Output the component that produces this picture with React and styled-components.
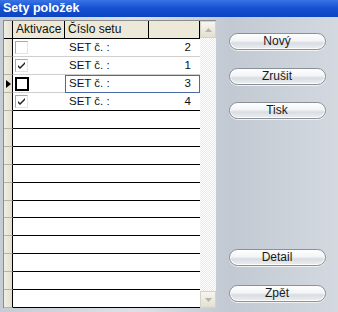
import React from "react";
import styled, { createGlobalStyle } from "styled-components";

const Global = createGlobalStyle`
  html, body { margin: 0; padding: 0; }
  body { font-family: "Liberation Sans", Arial, sans-serif; }
`;

const Window = styled.div`
  width: 338px;
  height: 312px;
  display: flex;
  flex-direction: column;
  overflow: hidden;
  background: linear-gradient(90deg, #c6ccd5 0%, #dde1e7 40%, #c2c9d2 68%, #d4d9e0 100%);
`;

const TitleBar = styled.div`
  height: 17px;
  flex: none;
  background: linear-gradient(180deg, #3a74e6 0%, #1652d4 45%, #0c44c0 100%);
  color: #fff;
  font-weight: bold;
  font-size: 12.5px;
  line-height: 17px;
  padding-left: 3px;
  font-family: "Liberation Sans", Arial, sans-serif;
`;

const Body = styled.div`
  flex: 1;
  display: flex;
  padding: 3px 0 0 3px;
`;

const Grid = styled.div`
  width: 213px;
  height: 288px;
  display: flex;
  background: #fff;
  box-sizing: border-box;
  border-left: 1px solid #8c8c8c;
  border-top: 1px solid #8c8c8c;
`;

const Table = styled.div`
  width: 196px;
  display: flex;
  flex-direction: column;
`;

const Row = styled.div`
  display: grid;
  grid-template-columns: 9px 52px 135px;
  height: 18px;
  & > * {
    box-sizing: border-box;
    border-bottom: 1px solid ${(p) => (p.$data ? "#cfcfcf" : "#000")};
  }
  & > *:first-child {
    border-bottom-color: ${(p) => (p.$header ? "#000" : "#b8b4a4")};
  }
`;

const RowHead = styled.div`
  background: linear-gradient(90deg, #f0eee2, #e2dfcf);
  border-right: 1px solid #000;
  display: flex;
  align-items: center;
  justify-content: center;
`;

const HeadGroup = styled.div`
  display: grid;
  grid-template-columns: 84px 51px;
`;

const HeadCell = styled.div`
  font-size: 12px;
  color: #111;
  line-height: 17px;
  padding-left: 3px;
  border-right: 1px solid #000;
  white-space: nowrap;
  overflow: hidden;
  background: #ece9d8;
`;

const ValueGroup = styled.div`
  display: grid;
  grid-template-columns: 84px 51px;
  ${(p) => p.$focus && "outline: 1px solid #4a6aa8; outline-offset: -1px;"}
`;

const Cell = styled.div`
  font-size: 11.5px;
  color: #111;
  line-height: 17px;
  padding: 0 ${(p) => (p.$right ? "9px" : "2px")} 0 4px;
  text-align: ${(p) => (p.$right ? "right" : "left")};
  white-space: nowrap;
`;

const CheckCell = styled.div`
  display: flex;
  align-items: center;
  padding-left: 2px;
`;

const Box = styled.div`
  width: ${(p) => (p.$focus ? "10px" : "11px")};
  height: ${(p) => (p.$focus ? "10px" : "11px")};
  box-sizing: content-box;
  border: ${(p) => (p.$focus ? "2px solid #000" : "1px solid #a8a8a8")};
  border-right-color: ${(p) => (p.$focus ? "#000" : "#e4e4e4")};
  border-bottom-color: ${(p) => (p.$focus ? "#000" : "#e4e4e4")};
  background: #fff;
  display: flex;
  align-items: center;
  justify-content: center;
`;

const ScrollBar = styled.div`
  width: 16px;
  display: flex;
  flex-direction: column;
  background-color: #f4f3ee;
  background-image: repeating-conic-gradient(#ffffff 0 25%, #ebe9e0 0 50%);
  background-size: 2px 2px;
`;

const ScrollBtn = styled.div`
  height: 17px;
  background: linear-gradient(180deg, #f6f5f0, #e3e0d2);
  border: 1px solid #d6d3c4;
  box-sizing: border-box;
  display: flex;
  align-items: center;
  justify-content: center;
`;

const Track = styled.div`
  flex: 1;
`;

const Panel = styled.div`
  flex: 1;
  display: flex;
  flex-direction: column;
  align-items: center;
  padding-top: 13px;
`;

const Btn = styled.div`
  width: 97px;
  height: 17px;
  box-sizing: border-box;
  border-radius: 9px;
  border: 1px solid #8a9098;
  background: linear-gradient(180deg, #ffffff 0%, #f2f4f6 45%, #d9dde2 60%, #eceef1 100%);
  box-shadow: inset 0 0 0 1px #fdfdfd, 0 1px 0 #f0f2f4;
  font-family: "Liberation Sans", Arial, sans-serif;
  font-size: 12px;
  font-weight: 400;
  line-height: 15px;
  text-align: center;
  color: #1a1a1a;
  margin-top: ${(p) => p.$mt}px;
`;

const Check = () => (
  <svg width="9" height="9" viewBox="0 0 9 9">
    <path d="M1 4 L3 6 L8 1 L8 3 L3 8 L1 6 Z" fill="#202020" />
  </svg>
);

const Arrow = ({ up }) => (
  <svg width="7" height="4" viewBox="0 0 7 4">
    <path d={up ? "M0 4 L3.5 0 L7 4 Z" : "M0 0 L3.5 4 L7 0 Z"} fill="#b9b6a8" />
  </svg>
);

const Pointer = () => (
  <svg width="5" height="8" viewBox="0 0 5 8">
    <path d="M0 0 L5 4 L0 8 Z" fill="#000" />
  </svg>
);

const data = [
  { checked: false, n: 2 },
  { checked: true, n: 1 },
  { checked: false, n: 3, focus: true },
  { checked: true, n: 4 },
];

export default function App() {
  const empty = Array.from({ length: 11 });
  return (
    <>
      <Global />
      <Window>
        <TitleBar>Sety položek</TitleBar>
        <Body>
          <Grid>
            <Table>
              <Row $header>
                <RowHead />
                <HeadCell>Aktivace</HeadCell>
                <HeadGroup>
                  <HeadCell>Číslo setu</HeadCell>
                  <HeadCell />
                </HeadGroup>
              </Row>
              {data.map((d, i) => (
                <Row key={i} $data={i < 3}>
                  <RowHead>{d.focus && <Pointer />}</RowHead>
                  <CheckCell>
                    <Box $focus={d.focus}>{d.checked && <Check />}</Box>
                  </CheckCell>
                  <ValueGroup $focus={d.focus}>
                    <Cell>SET č. :</Cell>
                    <Cell $right>{d.n}</Cell>
                  </ValueGroup>
                </Row>
              ))}
              {empty.map((_, i) => (
                <Row key={"e" + i}>
                  <RowHead />
                  <Cell />
                  <Cell />
                </Row>
              ))}
            </Table>
            <ScrollBar>
              <ScrollBtn>
                <Arrow up />
              </ScrollBtn>
              <Track />
              <ScrollBtn>
                <Arrow />
              </ScrollBtn>
            </ScrollBar>
          </Grid>
          <Panel>
            <Btn $mt={0}>Nový</Btn>
            <Btn $mt={18}>Zrušit</Btn>
            <Btn $mt={17}>Tisk</Btn>
            <Btn $mt={130}>Detail</Btn>
            <Btn $mt={19}>Zpět</Btn>
          </Panel>
        </Body>
      </Window>
    </>
  );
}
